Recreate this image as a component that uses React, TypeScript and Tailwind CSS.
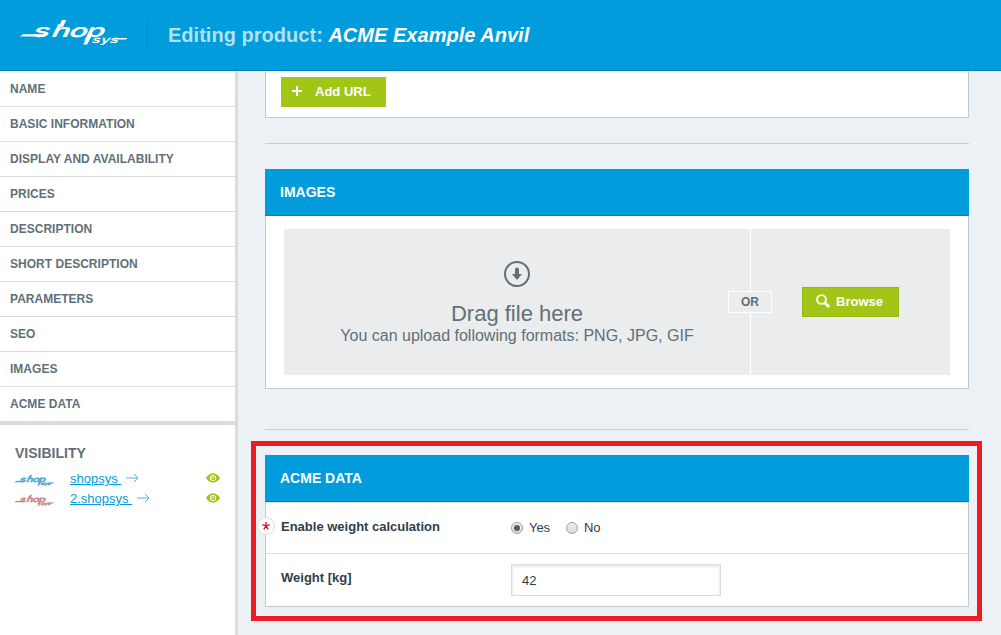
import type { ReactNode } from 'react';

const sections = [
  'NAME',
  'BASIC INFORMATION',
  'DISPLAY AND AVAILABILITY',
  'PRICES',
  'DESCRIPTION',
  'SHORT DESCRIPTION',
  'PARAMETERS',
  'SEO',
  'IMAGES',
  'ACME DATA',
];

const domains = [
  { name: 'shopsys', tone: 'text-[#4bacd6]' },
  { name: '2.shopsys', tone: 'text-[#c68b8e]' },
];

function Logo({ className }: { className: string }) {
  return (
    <svg viewBox="0 0 108 28" className={`overflow-visible ${className}`} fill="currentColor" preserveAspectRatio="none" aria-label="shopsys">
      <path d="M0 16.600L3 14.200H27L25 16.600Z" />
      <g transform="matrix(1.7 0 -0.5 1 8.300 0)">
        <text x="6.500 17.500 27.800 37.600" y="16.600" fontFamily="Inter, sans-serif" fontWeight="600" fontSize="18">shop</text>
      </g>
      <g transform="matrix(1.65 0 -0.5 1 11.200 0)">
        <text x="43 48.500 54" y="23" fontFamily="Inter, sans-serif" fontWeight="600" fontSize="9.500">sys</text>
      </g>
      <path d="M42 0H46.400L42.900 7H38.500Z" />
      <path d="M67.500 16H71.500L67.200 24.500H63.200Z" />
      <path d="M94 18H107.500L106 19.500H94Z" />
    </svg>
  );
}

function Eye() {
  return (
    <svg viewBox="0 0 14 10" className="h-[10px] w-[14px]" fill="none">
      <path d="M0 5C3.500 -1.200 10.500 -1.200 14 5C10.500 11.200 3.500 11.200 0 5Z" fill="#a2c617" />
      <circle cx="7" cy="5" r="2.700" stroke="white" strokeWidth="1" />
      <path d="M7 3.400V5.200H5.400" stroke="white" strokeWidth="0.9" />
    </svg>
  );
}

function ArrowRight() {
  return (
    <svg viewBox="0 0 13 10" className="mb-0.5 h-[10px] w-[13px]" fill="none" stroke="#4da9dc" strokeWidth="0.9">
      <path d="M0 5H12M8 1L12 5L8 9" />
    </svg>
  );
}

function PanelHeader({ children }: { children: ReactNode }) {
  return (
    <h2 className="h-[47px] border-b border-[#0084c0] bg-[#009cdb] pl-[15px] text-[14px] leading-[46px] font-bold text-white">
      {children}
    </h2>
  );
}

function Radio({ label, checked }: { label: string; checked?: boolean }) {
  return (
    <label className="flex items-center gap-[6px]">
      <span className="mb-px flex size-[12px] items-center justify-center rounded-full border border-[#a3a3a3] bg-linear-to-b from-[#eeeeee] to-[#dadada]">
        {checked && <span className="size-[6px] rounded-full bg-[#5c5c5c]" />}
      </span>
      <span className="tracking-[-0.1px]">{label}</span>
    </label>
  );
}

export default function App() {
  return (
    <div className="flex h-[635px] w-[1001px] flex-col overflow-hidden bg-[#ebf1f4] font-['Liberation_Sans',Arial,sans-serif] text-[13px] text-[#2f3e49]">
      <header className="flex h-[71px] shrink-0 items-start border-b border-[#0084c0] bg-[#009cdb]">
        <div className="mt-5 ml-5 flex h-[30px] w-[128px] border-r border-[#008ac7]">
          <Logo className="h-[28px] w-[108px] text-white" />
        </div>
        <h1 className="mt-[23px] ml-5 text-[20px] leading-6 font-bold tracking-[0.025px] whitespace-nowrap text-[#b2e1f4]">
          Editing product: <em className="text-white">ACME Example Anvil</em>
        </h1>
      </header>

      <div className="flex min-h-0 flex-1">
        <aside className="w-[238px] shrink-0 border-r-3 border-[#d9dddd] bg-white text-[#617078]">
          <nav className="border-b-4 border-[#d9dddd] pt-px">
            {sections.map((s) => (
              <a key={s} className="block h-[35px] border-b border-[#d9dddd] pl-[10px] text-[12px] leading-[34px] font-bold tracking-[0.02px] last:h-[34px] last:border-b-0">
                {s}
              </a>
            ))}
          </nav>
          <div className="pt-[20px] pl-[15px]">
            <h3 className="text-[14px] leading-4 font-bold">VISIBILITY</h3>
            <ul className="mt-[8px]">
              {domains.map((d) => (
                <li key={d.name} className="flex h-5 items-center pr-[15px]">
                  <Logo className={`mt-[3px] h-[12px] w-[39px] stroke-current ${d.tone}`} />
                  <a className="mr-[5px] ml-4 text-[13px] whitespace-pre text-[#009cdb] underline underline-offset-1">{d.name + ' '}</a>
                  <ArrowRight />
                  <span className="mb-0.5 ml-auto">
                    <Eye />
                  </span>
                </li>
              ))}
            </ul>
          </div>
        </aside>

        <main className="flex flex-1 flex-col pr-8 pl-[27px]">
          <section className="h-[47px] border border-t-0 border-[#c3cbd0] bg-white pl-[15px]">
            <div className="h-[6px] border-t border-[#e3e7e9]" />
            <button className="flex h-[30px] w-[105px] items-center bg-[#a2c617] pl-[11px] text-[13px] font-bold text-white">
              <svg viewBox="0 0 10 10" className="mr-[13px] mb-0.5 size-[10px]" stroke="white" strokeWidth="2">
                <path d="M0 5H10M5 0V10" />
              </svg>
              Add URL
            </button>
          </section>

          <hr className="mt-[25px] border-[#c8cdd1]" />

          <section className="mt-[25px]">
            <PanelHeader>IMAGES</PanelHeader>
            <div className="h-[173px] border border-t-0 border-[#c3c9cf] bg-white pt-[13px] pr-[18px] pl-[18px]">
              <div className="relative flex h-[146px] bg-[#eaeced] text-[#617078]">
                <div className="flex w-[467px] flex-col items-center border-r border-white pt-[32px]">
                  <svg viewBox="0 0 26 26" className="size-[26px]" fill="none">
                    <circle cx="13" cy="13" r="12" stroke="#617078" strokeWidth="2" />
                    <path d="M11 8.500Q11 6.500 13 6.500T15 8.500V13H18L13 19L8 13H11Z" fill="#617078" />
                  </svg>
                  <p className="mt-[14px] text-[22px] leading-[26px]">Drag file here</p>
                  <p className="text-[16px] leading-[18px]">You can upload following formats: PNG, JPG, GIF</p>
                </div>
                <div className="flex flex-1 items-center justify-center">
                  <button className="flex h-[30px] w-[97px] items-center bg-[#a2c617] pl-[14px] text-[13px] font-bold text-white shadow-[inset_0_0_0_1px_#94b80f]">
                    <svg viewBox="0 0 14 14" className="mr-[6px] mb-0.5 size-[14px] shrink-0" fill="none" stroke="white">
                      <circle cx="5.500" cy="5.500" r="4.400" strokeWidth="1.9" />
                      <path d="M9 9L13 13" strokeWidth="2.8" />
                    </svg>
                    Browse
                  </button>
                </div>
                <span className="absolute top-[62px] left-[444px] h-[22px] w-[44px] border border-white bg-[#eaeced] text-center text-[12px] leading-[21px] font-bold">
                  OR
                </span>
              </div>
            </div>
          </section>

          <hr className="mt-[40px] border-[#c8cdd1]" />

          <section className="-mr-[13px] -ml-[14px] mt-[11px] h-[180px] border-5 border-[#ed1c24] pt-[9px] pr-2 pl-[9px]">
            <PanelHeader>ACME DATA</PanelHeader>
            <div className="h-[105px] border border-[#c3cbd0] border-t-[#d9dddd] bg-white">
              <div className="relative flex h-[51px] items-center border-b border-[#d9dddd] pl-[15px]">
                <span className="absolute top-[14px] -left-[9px] flex size-[18px] items-center justify-center rounded-full border border-[#d9dddd] bg-white">
                  <svg viewBox="0 0 8 8" className="mb-px size-[8px]" stroke="#e30613" strokeWidth="1.3">
                    <path d="M4 4V0M4 4L0.300 2.700M4 4L7.700 2.700M4 4L1.800 7.400M4 4L6.200 7.400" />
                  </svg>
                </span>
                <span className="-mt-0.5 w-[230px] font-bold">Enable weight calculation</span>
                <div className="flex gap-4">
                  <Radio label="Yes" checked />
                  <Radio label="No" />
                </div>
              </div>
              <div className="flex h-[52px] items-center pl-[15px]">
                <span className="-mt-[5px] w-[230px] font-bold">Weight [kg]</span>
                <input
                  defaultValue="42"
                  className="h-[32px] w-[210px] border border-[#d9dddd] bg-white pl-[10px] shadow-[inset_0_1px_2px_1px_#eaeded] outline-none"
                />
              </div>
            </div>
          </section>
        </main>
      </div>
    </div>
  );
}
